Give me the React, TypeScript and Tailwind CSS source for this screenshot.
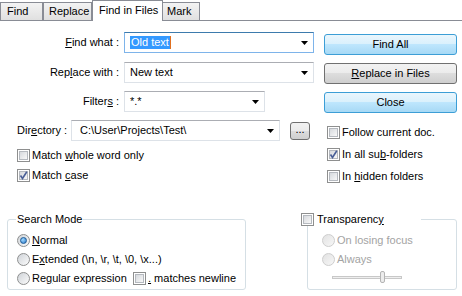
import React from "react"

const Arrow = () => (
  <svg width="7" height="4" viewBox="0 0 7 4">
    <path d="M0 0h7L3.5 4z" fill="#000" />
  </svg>
)

const Combo = ({
  width,
  focused,
  children,
}: {
  width: string
  focused?: boolean
  children: React.ReactNode
}) => (
  <div
    className={`flex h-[21px] items-center border bg-white ${width} ${
      focused ? "border-[#7eb4ea] border-t-[#3d7bad]" : "border-[#dde2e8] border-t-[#abadb3]"
    }`}
  >
    <div className="flex flex-1 items-center pl-[5px] whitespace-nowrap">{children}</div>
    <div className="flex w-[18px] justify-center">
      <Arrow />
    </div>
  </div>
)

const Button = ({ blue, children }: { blue?: boolean; children: React.ReactNode }) => (
  <button
    className={`flex h-[21px] w-full items-center justify-center rounded-[3px] border ${
      blue
        ? "border-[#3c9ed6] bg-[linear-gradient(to_bottom,#eaf6fd_0%,#d9f0fc_50%,#bee6fd_50%,#a7d9f5_100%)]"
        : "border-[#707070] bg-[linear-gradient(to_bottom,#f2f2f2_0%,#ebebeb_50%,#dddddd_50%,#cfcfcf_100%)]"
    }`}
  >
    {children}
  </button>
)

const Check = ({ checked }: { checked?: boolean }) => (
  <span className="flex h-[13px] w-[13px] shrink-0 items-center justify-center border border-[#8e8f8f] bg-white p-[1px]">
    <span className="relative flex h-full w-full items-center justify-center border border-[#b5b9bf] bg-[linear-gradient(135deg,#d6d9dd,#f8f8f8)]">
      {checked && (
        <svg className="absolute -left-[2px] -top-[2px]" width="11" height="11" viewBox="0 0 11 11">
          <path d="M2.5 5.5L4.5 8.5L8.8 1.8" stroke="#4a5f97" strokeWidth="1.6" fill="none" />
        </svg>
      )}
    </span>
  </span>
)

const Radio = ({ checked, disabled }: { checked?: boolean; disabled?: boolean }) => (
  <span
    className={`flex h-[13px] w-[13px] shrink-0 items-center justify-center rounded-full border ${
      disabled
        ? "border-[#cdcdcd] bg-[linear-gradient(135deg,#e2e2e2,#f7f7f7)]"
        : "border-[#8e8f8f] bg-[linear-gradient(135deg,#cfd3d8,#fbfbfb)]"
    }`}
  >
    {checked && (
      <span className="h-[7px] w-[7px] rounded-full border border-[#1d5a96] bg-[radial-gradient(circle_at_35%_35%,#9fd8ff,#2a78c8)]" />
    )}
  </span>
)

const Tabs = () => (
  <div className="flex h-[21px] items-end border-b border-[#898c95]">
    <div className="flex h-[18px] w-[43px] items-center border border-b-0 border-[#898c95] bg-[linear-gradient(to_bottom,#f3f3f3,#e0e0e0)] pl-[6px]">
      Find
    </div>
    <div className="flex h-[18px] w-[49px] items-center border border-b-0 border-[#898c95] bg-[linear-gradient(to_bottom,#f3f3f3,#e0e0e0)] pl-[5px]">
      Replace
    </div>
    <div className="-mb-px flex h-[21px] w-[71px] items-center border border-b-0 border-[#898c95] bg-white pb-[2px] pl-[6px]">
      Find in Files
    </div>
    <div className="flex h-[18px] w-[37px] items-center border border-b-0 border-l-0 border-[#898c95] bg-[linear-gradient(to_bottom,#f3f3f3,#e0e0e0)] pl-[4px]">
      Mark
    </div>
  </div>
)

const Row = ({ label, children }: { label: React.ReactNode; children: React.ReactNode }) => (
  <div className="flex h-[21px] items-center">
    <span className="w-[119px] text-right whitespace-nowrap">{label}</span>
    <div className="ml-[5px]">{children}</div>
  </div>
)

const CheckRow = ({
  checked,
  height,
  children,
}: {
  checked?: boolean
  height: string
  children: React.ReactNode
}) => (
  <div className={`flex items-center gap-[2px] ${height}`}>
    <Check checked={checked} />
    <span className="whitespace-nowrap">{children}</span>
  </div>
)

const RadioRow = ({
  checked,
  disabled,
  children,
}: {
  checked?: boolean
  disabled?: boolean
  children: React.ReactNode
}) => (
  <div className={`flex h-[19px] items-center gap-[2px] ${disabled ? "text-[#a3a3a3]" : ""}`}>
    <Radio checked={checked} disabled={disabled} />
    <span className="whitespace-nowrap">{children}</span>
  </div>
)

export default function App() {
  return (
    <div className="h-[296px] w-[462px] overflow-hidden bg-white font-['Liberation_Sans',Arial,sans-serif] text-[11px] leading-[13px] text-black">
      <Tabs />

      <div className="mt-[11px] flex">
        <div className="flex w-[314px] flex-col">
          <Row
            label={
              <>
                <u>F</u>ind what :
              </>
            }
          >
            <Combo width="w-[190px]" focused>
              <span className="bg-[#3399ff] px-[1px] text-white">Old text</span>
              <span className="h-[13px] w-px bg-[#e07020]" />
            </Combo>
          </Row>
          <div className="mt-[9px]">
            <Row
              label={
                <>
                  Rep<u>l</u>ace with :
                </>
              }
            >
              <Combo width="w-[190px]">New text</Combo>
            </Row>
          </div>
          <div className="mt-[8px]">
            <Row
              label={
                <>
                  Filter<u>s</u> :
                </>
              }
            >
              <Combo width="w-[141px]">*.*</Combo>
            </Row>
          </div>
        </div>
        <div className="ml-[10px] flex w-[133px] flex-col gap-[8px] pt-[2px]">
          <Button blue>Find All</Button>
          <Button>
            <span>
              <u>R</u>eplace in Files
            </span>
          </Button>
          <Button blue>Close</Button>
        </div>
      </div>

      <div className="mt-[7px] flex">
        <div className="flex w-[310px] flex-col pl-[17px]">
          <div className="flex h-[21px] items-center">
            <span className="w-[54px] whitespace-nowrap">
              Dir<u>e</u>ctory :
            </span>
            <Combo width="w-[209px]">
              <span className="pl-[3px]">C:\User\Projects\Test\</span>
            </Combo>
            <button className="ml-[10px] flex h-[18px] w-[20px] items-center justify-center rounded-[3px] border border-[#707070] bg-[linear-gradient(to_bottom,#f2f2f2_0%,#ebebeb_50%,#dddddd_50%,#cfcfcf_100%)] pb-[3px]">
              ...
            </button>
          </div>
          <div className="mt-[4px]">
            <CheckRow height="h-[20px]">
              Match <u>w</u>hole word only
            </CheckRow>
            <CheckRow height="h-[20px]" checked>
              Match <u>c</u>ase
            </CheckRow>
          </div>
        </div>
        <div className="ml-[17px] flex flex-col pt-[1px]">
          <CheckRow height="h-[22px]">Follow current doc.</CheckRow>
          <CheckRow height="h-[22px]" checked>
            In all su<u>b</u>-folders
          </CheckRow>
          <CheckRow height="h-[22px]">
            In <u>h</u>idden folders
          </CheckRow>
        </div>
      </div>

      <div className="mt-[26px] flex items-start">
        <fieldset className="ml-[7px] w-[239px] rounded-[3px] border border-[#d5dfe5] pb-[1px] pl-[9px] pt-[5px]">
          <legend className="ml-[-1px] px-[1px]">Search Mode</legend>
          <RadioRow checked>
            <u>N</u>ormal
          </RadioRow>
          <RadioRow>
            E<u>x</u>tended (\n, \r, \t, \0, \x...)
          </RadioRow>
          <div className="flex h-[19px] items-center">
            <div className="w-[116px]">
              <RadioRow>
                Re<u>g</u>ular expression
              </RadioRow>
            </div>
            <CheckRow height="h-[19px]">
              <u>.</u> matches newline
            </CheckRow>
          </div>
        </fieldset>

        <fieldset className="ml-[61px] w-[150px] rounded-[3px] border border-[#d5dfe5] pb-[1px] pl-[14px] pt-[5px]">
          <legend className="ml-[-21px] w-[120px]">
            <span className="flex items-center gap-[3px]">
              <Check />
              <span>
                Transparenc<u>y</u>
              </span>
            </span>
          </legend>
          <RadioRow disabled>On losing focus</RadioRow>
          <RadioRow disabled>Always</RadioRow>
          <div className="flex h-[19px] items-start pt-[2px]">
            <div className="relative ml-[10px] flex h-[12px] w-[70px] items-center">
              <div className="h-[3px] w-full border border-[#c8c8c8] bg-[#eeeeee]" />
              <div className="absolute left-[48px] top-0 h-[12px] w-[5px] rounded-[2px] border border-[#b4b4b4] bg-[#ececec]" />
            </div>
          </div>
        </fieldset>
      </div>
    </div>
  )
}
